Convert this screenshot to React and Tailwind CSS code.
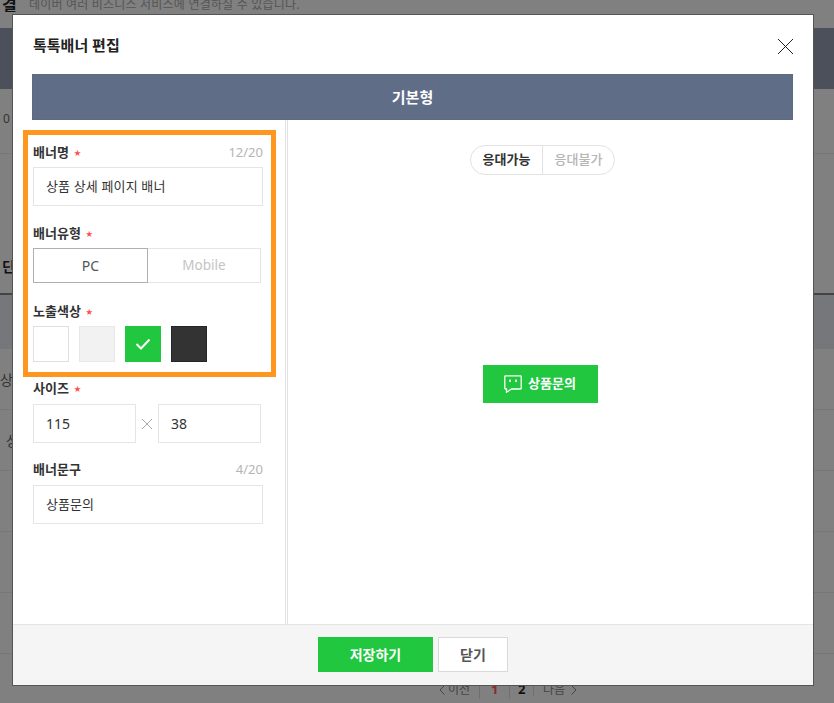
const font = { fontFamily: '"Noto Sans", "Noto Sans CJK KR", sans-serif' };

function Label({ children, required, count }) {
  return (
    <div className="flex h-[20px] items-center justify-between">
      <span className="flex items-center text-[13px] font-bold text-[#333]">
        {children}
        {required && <span className="ml-[5px] text-[7px] text-[#ff5050]">★</span>}
      </span>
      {count && <span className="text-[13px] text-[#b5b5b5]">{count}</span>}
    </div>
  );
}

function Field({ value, className = '' }) {
  return (
    <div className={`flex h-[39px] items-center border border-[#e5e5e5] pl-[12px] text-[#333] ${className}`}>
      {value}
    </div>
  );
}

function Swatch({ className = '', children }) {
  return <div className={`flex h-[36px] w-[36px] items-center justify-center border ${className}`}>{children}</div>;
}

function Background() {
  return (
    <div className="h-[703px] overflow-hidden bg-[#808080]">
      <div className="flex h-[12px] items-end overflow-hidden pl-[2px] leading-[14px]">
        <span className="w-[27px] text-[16px] font-bold text-[#111]">결</span>
        <span className="text-[12px] tracking-[0.2px] text-[#555]">데이버 여러 비즈니스 서비스에 연결하실 수 있습니다.</span>
      </div>
      <div className="mt-[16px] h-[61px] bg-[#4c505b]" />
      <div className="flex h-[65px] items-start border-b border-[#777] pl-[3px] pt-[21px] text-[12px] text-[#333]">0</div>
      <div className="h-[141px] border-b-2 border-[#444] pl-[2px] pt-[102px] text-[14px] font-bold text-[#111]">딘</div>
      <div className="h-[54px] border-b border-[#777] bg-[#75777b]" />
      <div className="h-[61px] border-b border-[#777] pt-[20px] text-[14px] text-[#333]">상</div>
      <div className="h-[61px] border-b border-[#777] pl-[6px] pt-[20px] text-[14px] text-[#333]">상</div>
      <div className="h-[61px] border-b border-[#777]" />
      <div className="h-[61px] border-b border-[#777]" />
      <div className="h-[61px] border-b border-[#777]" />
    </div>
  );
}

function Pagination() {
  return (
    <div className="absolute left-[439px] top-[681px] flex h-[18px] items-center text-[12px] text-[#444]">
      <span className="flex h-full w-[40px] items-center gap-[3px]">
        <svg width="6" height="10" viewBox="0 0 6 10" fill="none"><path d="M5.5.5L1 5l4.500 4.500" stroke="#444" /></svg>
        이전
      </span>
      <span className="flex h-full w-[30px] items-center border-l border-[#6f6f6f] pl-[11px] text-[13px] font-bold text-[#8c2b2b]">1</span>
      <span className="flex h-full w-[24px] items-center border-l border-[#6f6f6f] pl-[8px] text-[13px] font-bold text-[#111]">2</span>
      <span className="flex h-[12px] items-center gap-[6px] border-l border-[#6f6f6f] pl-[9px]">
        나음
        <svg width="6" height="10" viewBox="0 0 6 10" fill="none"><path d="M.5.5L5 5 .5 9.500" stroke="#444" /></svg>
      </span>
    </div>
  );
}

function Modal() {
  return (
    <div className="absolute left-[12px] top-[14px] flex h-[672px] w-[802px] flex-col border border-[#555] bg-white">
      <div className="relative h-[59px] shrink-0">
        <h2 className="pl-[20px] pt-[20px] text-[15px] font-bold leading-[20px] text-[#222]">톡톡배너 편집</h2>
        <svg className="absolute right-[20px] top-[24px]" width="15" height="15" viewBox="0 0 15 15" fill="none">
          <path d="M0 0l15 15M15 0L0 15" stroke="#222" strokeWidth="1" />
        </svg>
      </div>
      <div className="ml-[19px] mr-[20px] flex h-[46px] shrink-0 items-center justify-center border border-[#5c6a84] bg-[#606d87] text-[15px] font-bold text-white">
        기본형
      </div>
      <div className="flex min-h-0 flex-1">
        <div className="w-[275px] shrink-0 border-r-[3px] border-double border-[#e2e2e2] pl-[20px] pr-[22px] pt-[23px]">
          <Label required count="12/20">배너명</Label>
          <Field value="상품 상세 페이지 배너" className="mt-[4px] text-[13px] tracking-[0.15px]" />
          <div className="mt-[18px]">
            <Label required>배너유형</Label>
          </div>
          <div className="mt-[4px] flex h-[35px] text-[14px]">
            <div className="flex w-[115px] items-center justify-center border border-[#b0b0b0] text-[#555]">PC</div>
            <div className="flex w-[113px] items-center justify-center border border-l-0 border-[#e5e5e5] text-[13.5px] text-[#c4c4c4]">Mobile</div>
          </div>
          <div className="mt-[19px]">
            <Label required>노출색상</Label>
          </div>
          <div className="mt-[4px] flex gap-[10px]">
            <Swatch className="border-[#e0e0e0] bg-white" />
            <Swatch className="border-[#e8e8e8] bg-[#f2f2f2]" />
            <Swatch className="border-[#20c73f] bg-[#20c73f]">
              <svg width="16" height="12" viewBox="0 0 16 12" fill="none">
                <path d="M1.500 6l4.500 4.500L14.500 1.500" stroke="#fff" strokeWidth="2" />
              </svg>
            </Swatch>
            <Swatch className="border-[#262626] bg-[#333]" />
          </div>
          <div className="mt-[17px]">
            <Label required>사이즈</Label>
          </div>
          <div className="mt-[5px] flex items-center">
            <Field value="115" className="w-[103px] text-[14px]" />
            <svg className="mx-[6px] shrink-0" width="10" height="10" viewBox="0 0 10 10" fill="none">
              <path d="M0 0l10 10M10 0L0 10" stroke="#aaa" />
            </svg>
            <Field value="38" className="w-[103px] text-[14px]" />
          </div>
          <div className="mt-[17px]">
            <Label count="4/20">배너문구</Label>
          </div>
          <Field value="상품문의" className="mt-[5px] text-[13px]" />
        </div>
        <div className="flex flex-1 flex-col items-center pr-[20px]">
          <div className="ml-[4px] mt-[25px] flex h-[30px] w-[145px] shrink-0 items-center rounded-full border border-[#e2e2e2] text-[13px]">
            <span className="flex h-full w-[72px] items-center justify-center border-r border-[#e2e2e2] font-bold text-[#333]">응대가능</span>
            <span className="flex h-full flex-1 items-center justify-center font-medium text-[#b5b5b5]">응대불가</span>
          </div>
          <div className="mt-[190px] flex h-[38px] w-[115px] items-center justify-center gap-[6px] bg-[#20c73f] pr-[1px] text-[13px] font-bold text-white">
            <svg width="18" height="18" viewBox="0 0 18 18" fill="none">
              <path d="M1.500.8h15a.7.7 0 0 1 .7.7v11.800a.7.7 0 0 1-.7.7H7.500l-5 3.200v-3.200h-1a.7.7 0 0 1-.7-.7V1.500a.7.7 0 0 1 .7-.7z" stroke="#fff" strokeWidth="1.300" />
              <path d="M6 4.500v2.500M12 4.500v2.500" stroke="#fff" strokeWidth="1.600" />
            </svg>
            상품문의
          </div>
        </div>
      </div>
      <div className="flex h-[61px] shrink-0 items-start justify-center gap-[5px] border-t border-[#e5e5e5] bg-[#f5f5f5] pt-[12px]">
        <button type="button" className="h-[35px] w-[115px] bg-[#20c73f] text-[14px] font-bold text-white">저장하기</button>
        <button type="button" className="h-[35px] w-[70px] border border-[#d9d9d9] bg-white text-[14px] font-bold text-[#555]">닫기</button>
      </div>
    </div>
  );
}

export default function App() {
  return (
    <div className="relative h-[703px] w-[834px] overflow-hidden" style={font}>
      <Background />
      <Pagination />
      <Modal />
      <div className="pointer-events-none absolute left-[23px] top-[130px] h-[247px] w-[253px] border-[5px] border-[#ff9620]" />
    </div>
  );
}
